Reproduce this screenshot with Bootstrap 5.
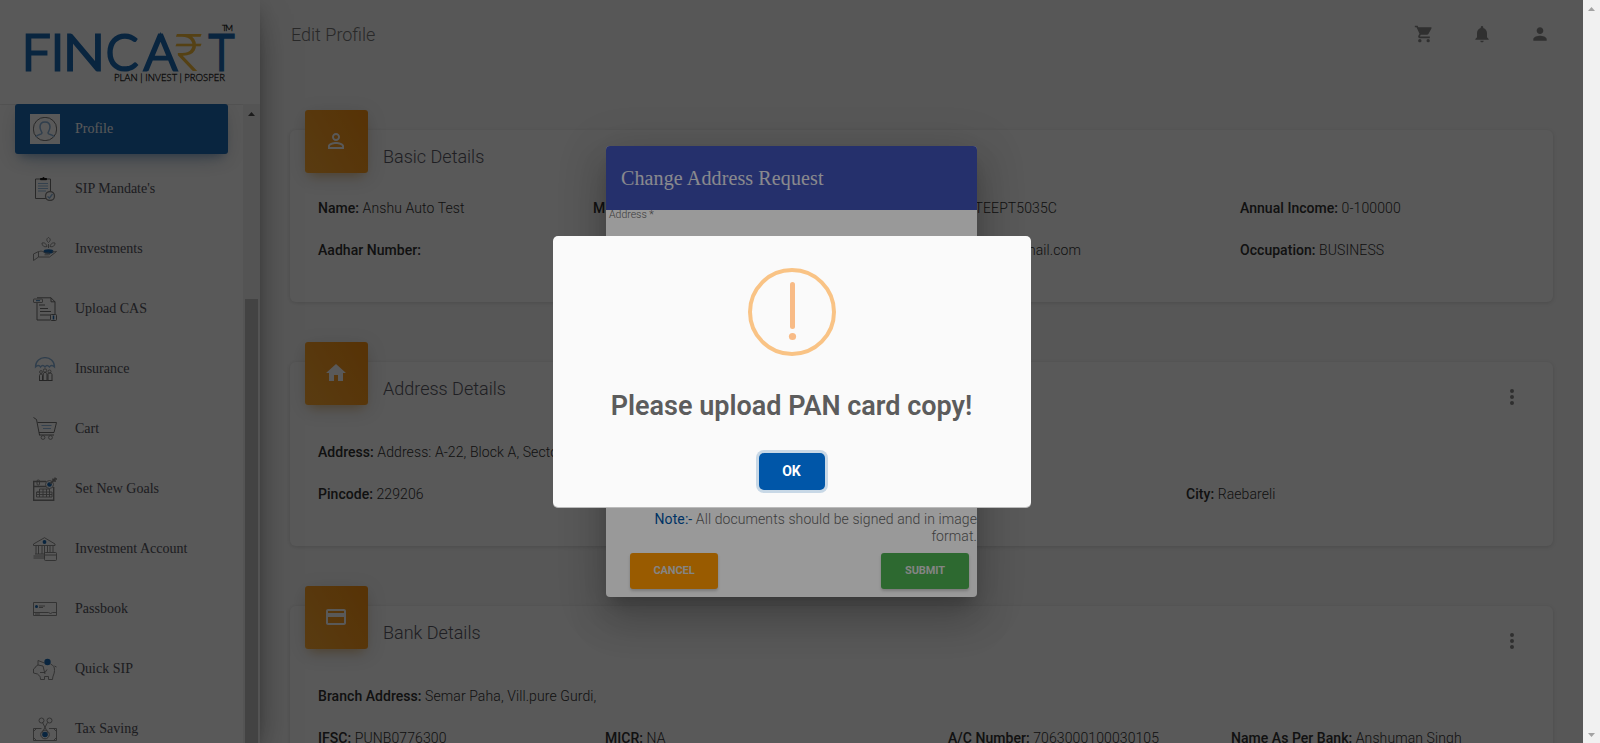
<!DOCTYPE html>
<html lang="en">
<head>
<meta charset="utf-8">
<title>Edit Profile</title>
<link href="https://cdn.jsdelivr.net/npm/bootstrap@5.3.0/dist/css/bootstrap.min.css" rel="stylesheet">
<style>
  html, body { height: 743px; overflow: hidden; }
  body { font-family: Roboto, "Liberation Sans", sans-serif; font-size: 14px; font-weight: 300; color: #333; background: #fafafa; line-height: 20px; }
  b { font-weight: 500; }
  .stage { width: 1583px; height: 743px; }
  .window-scroll { width: 17px; background: #f1f1f1; padding: 7px 0 6px; }
  .sidebar { width: 260px; background: #fff; z-index: 2; box-shadow: 0 16px 38px -12px rgba(0,0,0,.56), 0 4px 25px rgba(0,0,0,.12), 0 8px 10px -5px rgba(0,0,0,.2); }
  .brand { height: 104px; padding: 20px 0 0 20px; }
  .side-links { width: 243px; padding: 0 15px; font-family: "Liberation Serif", serif; font-size: 14px; height: 639px; overflow: hidden; box-shadow: inset 0 1px #ececec; }
  .side-item { width: 213px; height: 50px; margin-bottom: 10px; padding-left: 15px; gap: 15px; flex: none; border-radius: 3px; color: #55555e; }
  .side-item.current { background: #1c6bb6; color: #fff; box-shadow: 0 12px 20px -10px rgba(28,107,182,.28), 0 4px 20px rgba(0,0,0,.12), 0 7px 8px -5px rgba(28,107,182,.35); }
  .side-item svg { width: 30px; height: 30px; padding: 3px; fill: none; stroke: #888; stroke-width: .9; }
  .side-item.current svg { background: #fff; }
  .side-scroll { width: 17px; background: #f1f1f1; padding: 8px 0 0; }
  .side-thumb { width: 13px; height: 444px; margin-top: 183px; background: #c1c1c1; }
  .b { stroke: #1c6bb6; } .bf { fill: #1c6bb6; stroke: none; } .lb { stroke: #8ab4dc; } .dk { stroke: #666; }
  .topbar { height: 68px; padding: 0 33px 0 31px; font-size: 18px; color: #777; }
  .topbar span { padding-top: 1px; }
  .topbar svg { width: 20px; height: 20px; fill: #8a8a8a; }
  .panel { width: 1263px; margin-left: 30px; background: #fff; border-radius: 6px; box-shadow: 0 1px 4px rgba(0,0,0,.14); padding: 0 28px; }
  .panel-head { margin-left: -13px; height: 42px; gap: 15px; }
  .tile { width: 63px; height: 63px; margin-top: -20px; border-radius: 3px; background: linear-gradient(60deg, #ffac33, #fb9212); box-shadow: 0 4px 20px rgba(0,0,0,.14), 0 7px 10px -5px rgba(255,152,0,.4); flex: none; padding: 0 1px 1px 0; }
  .tile svg { width: 24px; height: 24px; fill: #fff; }
  .panel-title { font-size: 18px; padding-top: 17px; color: #5a5a66; line-height: 20px; }
  .dots { margin: 25px 3px 0 auto; width: 20px; height: 20px; fill: #888; align-self: start; }
  .facts { display: grid; height: 20px; margin-bottom: 22px; white-space: nowrap; letter-spacing: .1px; color: #333; }
  .facts b { letter-spacing: .04px; }
  .facts4 { grid-template-columns: 275px 287px 360px 1fr; }
  .factsB { grid-template-columns: 287px 343px 283px 1fr; }
  .factsA { grid-template-columns: 868px 1fr; }
  .veil { inset: 0; z-index: 5; }
  .veil-dialog { background: rgba(0,0,0,.42); }
  .veil-alert { background: rgba(0,0,0,.4); z-index: 6; }
  .dialog-box { width: 371px; height: 451px; background: #fff; border-radius: 4px; box-shadow: 0 11px 15px -7px rgba(0,0,0,.2), 0 24px 38px 3px rgba(0,0,0,.14), 0 9px 46px 8px rgba(0,0,0,.12); }
  .dialog-head { height: 64px; padding: 0 15px; background: #3f51b5; color: #e4e4ec; border-radius: 4px 4px 0 0; font: 20px "Liberation Serif", serif; letter-spacing: .12px; }
  .field-label { font-size: 10.5px; line-height: 10px; padding: 0 3px; color: #666; height: 298px; }
  .note { line-height: 17px; font-size: 14px; color: #666; height: 45px; padding: 3px 0 0 30px; letter-spacing: .09px; }
  .act { width: 88px; height: 36px; border: 0; border-radius: 3px; color: #ddd; font-size: 11px; font-weight: 700; box-shadow: 0 2px 3px rgba(0,0,0,.2); padding: 0 0 1px; letter-spacing: -.1px; }
  .act-cancel { background: #ff9800; } .act-submit { background: #4caf50; }
  .alert-box { width: 478px; height: 272px; background: #fafafa; border-radius: 5px; padding-top: 32px; margin-top: 1px; box-shadow: inset 0 -1px rgba(0,0,0,.25); }
  .alert-text { font-size: 27px; font-weight: 600; line-height: 32px; margin-top: 34px; color: #5c5c5c; white-space: nowrap; }
  .ok { width: 66px; height: 37px; margin-top: 31px; border: 0; border-radius: 5px; background: #0056a8; color: #fff; font-size: 14px; font-weight: 700; padding: 0 0 2px; box-shadow: 0 0 0 3px #c8d8e6; }
</style>
<script src="https://cdn.jsdelivr.net/npm/bootstrap@5.3.0/dist/js/bootstrap.bundle.min.js"></script>
</head>
<body class="d-flex">
<div class="stage d-flex position-relative overflow-hidden flex-shrink-0">
  <aside class="sidebar position-relative flex-shrink-0">
    <div class="brand">
      <svg width="220" height="66" viewBox="20 20 220 66">
        <g font-family="Lato, sans-serif" fill="#1c6bb6">
          <g font-size="50" stroke="#1c6bb6" stroke-width="3"><text x="22" y="69.500">F</text><text x="51" y="69.500">I</text><text x="63" y="69.500" textLength="42" lengthAdjust="spacingAndGlyphs">N</text><text x="106" y="69.500" textLength="32" lengthAdjust="spacingAndGlyphs">C</text><text x="144" y="69.500" textLength="33" lengthAdjust="spacingAndGlyphs">A</text><text x="209" y="69.500" textLength="25" lengthAdjust="spacingAndGlyphs">T</text></g>
          <text x="174" y="70.500" font-size="52" fill="#f5bc3c" font-family="Roboto, sans-serif" textLength="29" lengthAdjust="spacingAndGlyphs">₹</text>
          <text x="222" y="30.500" font-size="8.500" fill="#222" stroke="#222" stroke-width=".3" textLength="11">TM</text>
          <text x="114" y="81" font-size="10.500" fill="#222" stroke="#222" stroke-width=".3" textLength="111" lengthAdjust="spacingAndGlyphs">PLAN | INVEST | PROSPER</text>
        </g>
      </svg>
    </div>
    <div class="d-flex">
      <nav class="side-links d-flex flex-column">
        <div class="side-item current d-flex align-items-center"><svg viewBox="0 0 24 24"><circle class="dk" cx="12" cy="12" r="11.700"/><path class="lb" stroke-width="1.500" d="M3 20c1-3 6-2 6-4 0-1-2-3-2-6 0-3 2-5 5-5s5 2 5 5-2 5-2 6c0 2 5 1 6 4"/></svg>Profile</div>
        <div class="side-item d-flex align-items-center"><svg viewBox="0 0 24 24"><path class="dk" d="M13 21.500H2.500V2h15v13"/><path d="M7.500 2.700V1.500h2c0-1.200 2-1.200 2 0h2v1.200z" fill="#111" stroke="#111"/><path class="lb" d="M5 6.500h10M5 9h10M5 11.500h10M5 14h8"/><circle cx="17" cy="19" r="4.500" stroke-width="1.300"/><path class="lb" stroke-width="1.300" d="M14.500 19.500l2 1.500 3-4"/></svg>SIP Mandate's</div>
        <div class="side-item d-flex align-items-center"><svg viewBox="0 0 24 24"><path d="M15.500 11V7M15.500 5.500c-2.500-2-2-4 0-5 2 1 2.500 3 0 5zM14 9.500c-1-3.500-3-4-5-3.500 0 2.500 2 4.500 5 3.500zM17 9.500c1-3.500 3-4 5-3.500 0 2.500-2 4.500-5 3.500z"/><ellipse class="bf" cx="15.500" cy="14.500" rx="5" ry="2.200"/><path d="M.5 17l5-2.500V20l-5 3.500zM5.500 15c3-2 5 0 7 1h3.500c1.500.5 1 1.800-.5 1.800h-4M5.500 20h11L23.500 14.500l-4.500.5"/></svg>Investments</div>
        <div class="side-item d-flex align-items-center"><svg viewBox="0 0 24 24"><path class="dk" d="M4 6v17h13M4 .8h14l4 4V17M18 .8v4h4"/><rect x=".5" y="2" width="9" height="3.500" rx=".5"/><path class="b" d="M3 3.700h4"/><path class="dk" d="M6 8h6M7 11.500h8M7 14.500h11M7 18h11"/><rect class="dk" x="17.500" y="17.500" width="6" height="6" rx="1"/><path class="b" stroke-width="1.500" d="M20.500 22.500v-4"/></svg>Upload CAS</div>
        <div class="side-item d-flex align-items-center"><svg viewBox="0 0 24 24"><path class="lb" stroke-width="1.300" d="M2.500 10C2.500-2.500 21.500-2.500 21.500 10c-2-2-4-2-5 0-2-2-3-2-4.500 0-1.500-2-3-2-4.500 0-1-2-3-2-5 0z"/><circle cx="12" cy="13.500" r="1.700"/><circle cx="8" cy="15" r="1.400"/><circle cx="16.500" cy="14.500" r="1.500"/><path class="dk" d="M6.500 23.500v-5c0-2 3-2 3 0v5zM10.200 23.500v-6.500c0-2 3.800-2 3.800 0v6.500zM15 23.500v-6c0-2 4-2 4 0v6zM6 23.500h13.500"/></svg>Insurance</div>
        <div class="side-item d-flex align-items-center"><svg viewBox="0 0 24 24"><path class="dk" d="M.5.5l3 2 3 15.500M4.500 5.500h19L21 15.500H6M6 18h15"/><path class="lb" d="M8.500 8.500h10M10 11.500h8"/><circle cx="10" cy="20.500" r="1.900"/><circle cx="17.500" cy="20.500" r="1.900"/></svg>Cart</div>
        <div class="side-item d-flex align-items-center"><svg viewBox="0 0 24 24"><path stroke-width="1.400" d="M13 4.500H.7v18.800h20V10M1 9.500h12"/><rect x="4" y="3" width="2.500" height="5" rx="1"/><circle cx="16.500" cy="7.500" r="4"/><circle class="bf" cx="16.500" cy="7.500" r="2.300"/><path stroke-width="1.500" d="M17 7l5-5M20 1.500V4h3M22 .5V2h2"/><path d="M6.500 12h10v3H19v5H3.500v-5h3zM6.500 15v5M10 12v8M13.500 12v8M16.500 15v5M4 15h13M4 17.500h15"/></svg>Set New Goals</div>
        <div class="side-item d-flex align-items-center"><svg viewBox="0 0 24 24"><path d="M.5 7L11.500.7 22 7v1.500H.5zM3 9v8M5.500 9v8M9 9v8M11.500 9v8M14.500 9v6M17 9v6M20 9v6M2 17h9.500M.5 19h11M.5 21h11v-2"/><circle class="bf" cx="11.500" cy="5" r="1.900"/><rect x="11.500" y="15.500" width="12" height="8" rx="1"/><path d="M12 18h11"/></svg>Investment Account</div>
        <div class="side-item d-flex align-items-center"><svg viewBox="0 0 24 24"><path d="M.5 5.500h23v13H.5zM.5 15.500h15l2 1 2-1h4M2 17h5"/><circle class="bf" cx="3.500" cy="9.500" r="1.500"/><path d="M6 9h6M6 10.500h4"/></svg>Passbook</div>
        <div class="side-item d-flex align-items-center"><svg viewBox="0 0 24 24"><path d="M11.500 6L5 3.500V8C2 9 3 11 .5 12v4l4 1c2 2 3 2 3 5.500h4v-3h4v3h4c0-4 2-5 2-9s-1-5-4-6.500M21.500 9l2 1M5 8l5 1M7 15.500h5l2-3M10 9l2 8"/><circle class="bf" cx="14.500" cy="5" r="3.200"/></svg>Quick SIP</div>
        <div class="side-item d-flex align-items-center"><svg viewBox="0 0 24 24"><path d="M8.500 11.500H.5v12h23v-12H16M.5 14.500l3-3M.5 20.500l3 3M23.500 14.500l-3-3M23.500 20.500l-3 3M14.500 5.500L9 16M9.500 5.500L15 16"/><circle cx="8.500" cy="3.500" r="2.500"/><circle cx="16.500" cy="3.500" r="2.500"/><circle cx="12" cy="17.500" r="4.300"/><circle class="bf" cx="12" cy="17.500" r="2.800"/></svg>Tax Saving</div>
      </nav>
      <div class="side-scroll d-flex flex-column align-items-center"><svg width="7" height="4" class="flex-shrink-0"><path d="M0 4L3.500 0 7 4z" fill="#505050"/></svg><div class="side-thumb flex-shrink-0"></div></div>
    </div>
  </aside>
  <main class="flex-grow-1">
    <header class="topbar d-flex align-items-center"><span>Edit Profile</span>
      <div class="ms-auto d-flex" style="gap:38px">
        <svg viewBox="0 0 24 24"><path d="M7 18c-1.100 0-2 .9-2 2s.9 2 2 2 2-.9 2-2-.9-2-2-2zM1 2v2h2l3.600 7.600L5.200 14c-.1.300-.2.600-.2 1 0 1.100.9 2 2 2h12v-2H7.400c-.1 0-.2-.1-.2-.2L8.100 13h7.500c.7 0 1.400-.4 1.700-1L20.900 5.500c.6-1-.2-1.500-.9-1.500H5.200L4.300 2zM17 18a2 2 0 1 0 0 4 2 2 0 0 0 0-4z"/></svg>
        <svg viewBox="0 0 24 24"><path d="M12 22c1.100 0 2-.9 2-2h-4c0 1.100.9 2 2 2zm6-6v-5c0-3.070-1.640-5.640-4.500-6.320V4a1.500 1.500 0 0 0-3 0v.68C7.630 5.360 6 7.920 6 11v5l-2 2v1h16v-1z"/></svg>
        <svg viewBox="0 0 24 24"><path d="M12 12c2.210 0 4-1.790 4-4s-1.790-4-4-4-4 1.790-4 4 1.790 4 4 4zm0 2c-2.670 0-8 1.340-8 4v2h16v-2c0-2.660-5.330-4-8-4z"/></svg>
      </div>
    </header>
    <section class="panel" style="height:172px;margin-top:62px">
      <div class="panel-head d-flex"><div class="tile d-flex align-items-center justify-content-center"><svg viewBox="0 0 24 24"><path d="M12 5.900a2.100 2.100 0 1 1 0 4.200 2.100 2.100 0 0 1 0-4.200m0 9c2.970 0 6.100 1.460 6.100 2.100v1.100H5.900V17c0-.64 3.130-2.100 6.100-2.100M12 4C9.790 4 8 5.790 8 8s1.790 4 4 4 4-1.790 4-4-1.790-4-4-4zm0 9c-2.670 0-8 1.340-8 4v3h16v-3c0-2.660-5.330-4-8-4z"/></svg></div><div class="panel-title">Basic Details</div></div>
      <div class="facts facts4" style="margin-top:26px"><div><b>Name:</b> Anshu Auto Test</div><div><b>M</b></div><div class="text-end" style="width:177px">TEEPT5035C</div><div><b>Annual Income:</b> 0-100000</div></div>
      <div class="facts facts4"><div><b>Aadhar Number:</b></div><div></div><div class="text-end" style="width:201px">mail.com</div><div><b>Occupation:</b> BUSINESS</div></div>
    </section>
    <section class="panel" style="height:184px;margin-top:60px">
      <div class="panel-head d-flex"><div class="tile d-flex align-items-center justify-content-center"><svg viewBox="0 0 24 24"><path d="M10 20v-6h4v6h5v-8h3L12 3 2 12h3v8z"/></svg></div><div class="panel-title">Address Details</div><svg class="dots" viewBox="0 0 24 24"><path d="M12 7.200a2.400 2.400 0 1 0 0-4.800 2.400 2.400 0 0 0 0 4.800zm0 2.400a2.400 2.400 0 1 0 0 4.800 2.400 2.400 0 0 0 0-4.800zm0 7.200a2.400 2.400 0 1 0 0 4.800 2.400 2.400 0 0 0 0-4.800z"/></svg></div>
      <div class="facts" style="margin-top:38px"><div><b>Address:</b> Address: A-22, Block A, Secto</div></div>
      <div class="facts factsA"><div><b>Pincode:</b> 229206</div><div><b>City:</b> Raebareli</div></div>
    </section>
    <section class="panel" style="height:184px;margin-top:60px">
      <div class="panel-head d-flex"><div class="tile d-flex align-items-center justify-content-center"><svg viewBox="0 0 24 24"><path d="M20 4H4c-1.110 0-1.990.89-1.990 2L2 18c0 1.110.89 2 2 2h16c1.110 0 2-.89 2-2V6c0-1.110-.89-2-2-2zm0 14H4v-6h16v6zm0-10H4V6h16v2z"/></svg></div><div class="panel-title">Bank Details</div><svg class="dots" viewBox="0 0 24 24"><path d="M12 7.200a2.400 2.400 0 1 0 0-4.800 2.400 2.400 0 0 0 0 4.800zm0 2.400a2.400 2.400 0 1 0 0 4.800 2.400 2.400 0 0 0 0-4.800zm0 7.200a2.400 2.400 0 1 0 0 4.800 2.400 2.400 0 0 0 0-4.800z"/></svg></div>
      <div class="facts" style="margin-top:38px"><div><b>Branch Address:</b> Semar Paha, Vill.pure Gurdi,</div></div>
      <div class="facts factsB"><div><b>IFSC:</b> PUNB0776300</div><div><b>MICR:</b> NA</div><div><b>A/C Number:</b> 7063000100030105</div><div><b>Name As Per Bank:</b> Anshuman Singh</div></div>
    </section>
  </main>
  <div class="veil veil-dialog position-absolute d-flex align-items-center justify-content-center">
    <div class="dialog-box">
      <div class="dialog-head d-flex align-items-center">Change Address Request</div>
      <div class="field-label">Address *</div>
      <div class="note text-end"><span style="color:#0056a8;font-weight:400">Note:-</span> All documents should be signed and in image format.</div>
      <div class="d-flex justify-content-between" style="padding:0 8px 0 24px"><button class="act act-cancel">CANCEL</button><button class="act act-submit">SUBMIT</button></div>
    </div>
  </div>
  <div class="veil veil-alert position-absolute d-flex align-items-center justify-content-center">
    <div class="alert-box d-flex flex-column align-items-center">
      <svg width="88" height="88" class="flex-shrink-0"><circle cx="44" cy="44" r="42" fill="none" stroke="#f9c385" stroke-width="4"/><rect x="42" y="14" width="5" height="47" rx="2.500" fill="#f8bb86"/><circle cx="44.500" cy="68.500" r="3.600" fill="#f8bb86"/></svg>
      <div class="alert-text">Please upload PAN card copy!</div>
      <button class="ok">OK</button>
    </div>
  </div>
</div>
<div class="window-scroll d-flex flex-column justify-content-between align-items-center">
  <svg width="7" height="4"><path d="M0 4L3.500 0 7 4z" fill="#a3a3a3"/></svg>
  <svg width="7" height="4"><path d="M0 0L3.500 4 7 0z" fill="#a3a3a3"/></svg>
</div>
</body>
</html>
